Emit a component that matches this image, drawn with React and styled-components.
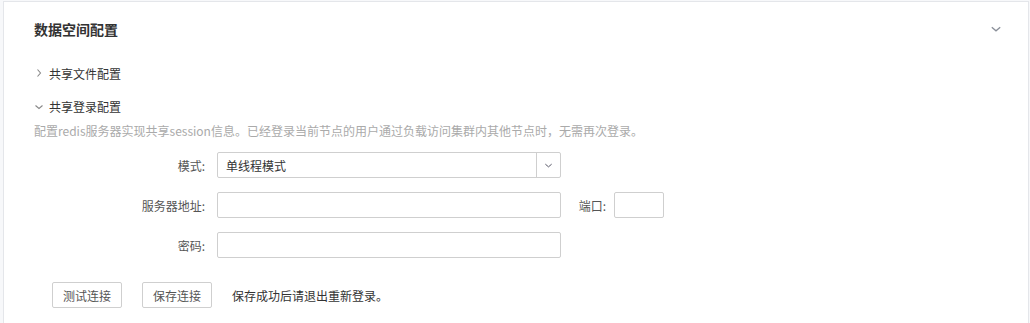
import React from "react";
import styled, { createGlobalStyle } from "styled-components";

const GlobalStyle = createGlobalStyle`
  body {
    margin: 0;
    background: #f7f8fa;
    font-family: "Noto Sans CJK SC", "Noto Sans", sans-serif;
    font-size: 12px;
    color: #333;
  }
`;

const Page = styled.div`
  padding: 1px 1px 0 3px;
  height: 322px;
  overflow: hidden;
`;

const Panel = styled.div`
  background: #fff;
  border: 1px solid #e4e6ea;
  border-bottom: none;
  height: 330px;
`;

const Header = styled.div`
  display: flex;
  align-items: center;
  justify-content: space-between;
  height: 53px;
  padding: 0 26px 1px 30px;
`;

const Title = styled.div`
  font-size: 14px;
  font-weight: bold;
  color: #333;
`;

const SectionRow = styled.div`
  display: flex;
  align-items: center;
  height: ${(p) => p.h}px;
  padding-left: 30px;
  color: #333;
  gap: 5px;
`;

const Desc = styled.div`
  padding-left: 30px;
  line-height: 15px;
  color: #aaa;
`;

const Form = styled.div`
  display: flex;
  flex-direction: column;
  gap: 14px;
  margin-top: 14px;
`;

const FormRow = styled.div`
  display: flex;
  align-items: center;
  height: 26px;
`;

const Label = styled.div`
  width: ${(p) => p.w}px;
  text-align: right;
  margin-right: ${(p) => p.gap}px;
  color: #555;
  flex-shrink: 0;
`;

const Input = styled.div`
  box-sizing: border-box;
  width: ${(p) => p.w}px;
  height: 26px;
  border: 1px solid #cfcfcf;
  border-radius: 2px;
  background: #fff;
`;

const Select = styled.div`
  box-sizing: border-box;
  display: flex;
  width: 344px;
  height: 26px;
  border: 1px solid #cfcfcf;
  border-radius: 2px;
`;

const SelectValue = styled.div`
  flex: 1;
  display: flex;
  align-items: center;
  padding-left: 8px;
  color: #333;
`;

const SelectArrow = styled.div`
  width: 23px;
  border-left: 1px solid #cfcfcf;
  display: flex;
  align-items: center;
  justify-content: center;
`;

const ButtonRow = styled.div`
  display: flex;
  align-items: center;
  margin-top: 24px;
  padding-left: 48px;
  gap: 20px;
`;

const Button = styled.div`
  box-sizing: border-box;
  width: 70px;
  height: 26px;
  border: 1px solid #cfcfcf;
  border-radius: 2px;
  display: flex;
  align-items: center;
  justify-content: center;
  color: #555;
`;

const Hint = styled.div`
  color: #333;
`;

const Chevron = ({ dir = "down", size = 10, color = "#8a8f99" }) => (
  <svg width={size} height={size} viewBox="0 0 10 10">
    <path
      d={dir === "down" ? "M1.5 3.5 L5 6.5 L8.5 3.5" : "M3.5 1.5 L6.5 5 L3.5 8.5"}
      fill="none"
      stroke={color}
      strokeWidth="1.1"
    />
  </svg>
);

export default function App() {
  return (
    <>
      <GlobalStyle />
      <Page>
        <Panel>
          <Header>
            <Title>数据空间配置</Title>
            <Chevron dir="down" size={12} />
          </Header>
          <SectionRow h={34}>
            <Chevron dir="right" size={10} color="#888" />
            <span>共享文件配置</span>
          </SectionRow>
          <SectionRow h={33}>
            <Chevron dir="down" size={10} color="#888" />
            <span>共享登录配置</span>
          </SectionRow>
          <Desc>配置redis服务器实现共享session信息。已经登录当前节点的用户通过负载访问集群内其他节点时，无需再次登录。</Desc>
          <Form>
            <FormRow>
              <Label w={201} gap={12}>模式:</Label>
              <Select>
                <SelectValue>单线程模式</SelectValue>
                <SelectArrow>
                  <Chevron dir="down" size={9} color="#556" />
                </SelectArrow>
              </Select>
            </FormRow>
            <FormRow>
              <Label w={201} gap={12}>服务器地址:</Label>
              <Input w={344} />
              <Label w={45} gap={8}>端口:</Label>
              <Input w={50} />
            </FormRow>
            <FormRow>
              <Label w={201} gap={12}>密码:</Label>
              <Input w={344} />
            </FormRow>
          </Form>
          <ButtonRow>
            <Button>测试连接</Button>
            <Button>保存连接</Button>
            <Hint>保存成功后请退出重新登录。</Hint>
          </ButtonRow>
        </Panel>
      </Page>
    </>
  );
}
